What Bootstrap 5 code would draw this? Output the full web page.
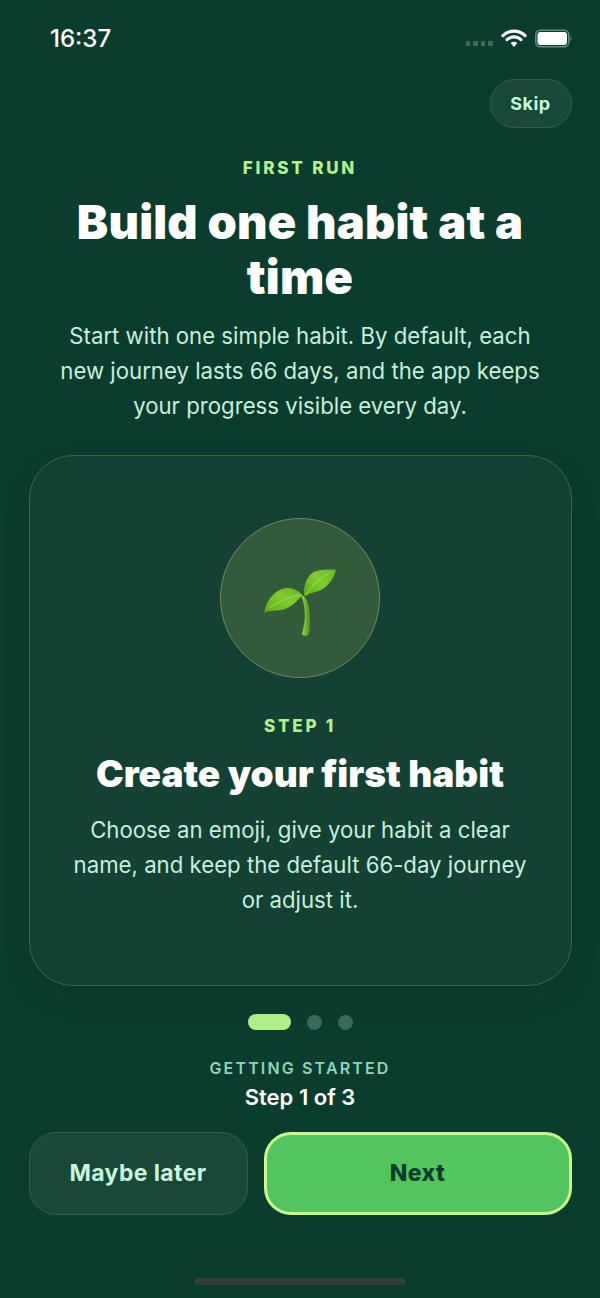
<!DOCTYPE html>
<html lang="en">
<head>
    <meta charset="UTF-8">
    <title>First Run</title>
    <link rel="stylesheet" href="https://cdn.jsdelivr.net/npm/bootstrap@5.3.0/dist/css/bootstrap.min.css">
    <style>
        body {
            background: #0b3d2f;
            font-family: Inter, "Liberation Sans", sans-serif;
            color: #fff;
        }
        .screen { width: 600px; height: 1298px; overflow: hidden; padding: 0 28.5px; }
        .status-row { height: 79px; padding: 25px 0 0 21.5px; }
        .status-icons { margin-top: 3px; }
        .status-time { font-size: 24px; font-weight: 500; line-height: 28px; color: #fff; }
        .signal-dots { gap: 3px; margin-top: 11px; margin-right: 8px; }
        .signal-dots i { display: block; width: 4.5px; height: 4.5px; border-radius: 1px; background: #3a6b5c; }
        .skip-btn {
            width: 82px; height: 49px; padding: 0;
            border-radius: 25px;
            background: #184838; border: 1px solid #2f5f50;
            color: #c9f5de; font-size: 18px; font-weight: 700; letter-spacing: .5px;
        }
        .eyebrow { font-size: 17px; font-weight: 800; letter-spacing: 2.8px; line-height: 20px; color: #b4f08c; }
        .hero-eyebrow { margin-top: 30px; }
        .hero-title { font-size: 47px; font-weight: 900; letter-spacing: .2px; line-height: 55px; margin: 16px 20px 0; color: #fff; }
        .hero-text { font-size: 22.2px; line-height: 35px; color: #c8eedc; margin: 14px 20px 0; }
        .step-card {
            height: 531px; margin-top: 32px;
            padding-top: 62px;
            border-radius: 44px;
            background: #134134; border: 1px solid #336b50;
            box-shadow: 0 12px 32px rgba(0, 0, 0, .08);
            color: #fff;
        }
        .seed-circle {
            width: 160px; height: 160px;
            background: #345a3c; border: 1.5px solid #6b8c5f;
        }
        .seed-circle svg { margin: 8px 0 0 2px; }
        .step-eyebrow { margin-top: 38px; }
        .step-title { font-size: 37px; font-weight: 900; line-height: 44px; margin: 16px 0 0; color: #fff; }
        .step-text { font-size: 22.2px; line-height: 35px; color: #c8eedc; margin: 16px 40px 0; }
        .pager { gap: 16px; margin-top: 28px; height: 16px; }
        .pager-on { width: 43px; height: 16px; border-radius: 8px; background: #b2ef88; }
        .pager-off { width: 15px; height: 15px; border-radius: 50%; background: #3d6a5b; }
        .progress-label { font-size: 16px; font-weight: 600; letter-spacing: 2.15px; line-height: 20px; color: #8fd5b8; margin-top: 28px; }
        .progress-step { font-size: 22px; font-weight: 600; line-height: 26px; color: #fff; margin-top: 6px; }
        .actions { gap: 16px; margin-top: 22px; }
        .later-btn, .next-btn { height: 83px; border-radius: 27px; font-size: 23px; font-weight: 700; letter-spacing: .4px; padding: 0; }
        .later-btn { width: 219px; background: #184838; border: 1px solid #2f5f50; color: #c9f5de; }
        .next-btn { flex: 1; background: #52c55e; border: 3px solid #cdf98a; color: #0b3d2f; font-weight: 800; }
        .home-bar { width: 212px; height: 7px; border-radius: 4px; background: #333f3a; margin: 63px auto 0; }
    </style>
</head>
<body>

<div class="screen">
    <div class="status-row d-flex justify-content-between align-items-start">
        <div class="status-time">16:37</div>
        <div class="status-icons d-flex align-items-center">
            <div class="signal-dots d-flex">
                <i></i><i></i><i></i><i></i>
            </div>
            <svg width="26" height="20" viewBox="0 0 24 19">
                <path d="M1.5 7.2C7.5 1.6 16.5 1.6 22.5 7.2M5.4 11C9.2 7.6 14.8 7.6 18.6 11" fill="none" stroke="#fff" stroke-width="3" stroke-linecap="round"/>
                <path d="M8.8 14.2C10.8 12.7 13.2 12.7 15.2 14.2L12 18Z" fill="#fff"/>
            </svg>
            <svg class="ms-2" width="37" height="19" viewBox="0 0 37 19">
                <rect x=".75" y="1.25" width="33" height="16.5" rx="4.5" fill="none" stroke="#5f8f80" stroke-width="1.5"/>
                <rect x="2.5" y="3" width="29.5" height="13" rx="3" fill="#fff"/>
                <path d="M35.3 7c1.4.5 1.4 4.5 0 5z" fill="#5f8f80"/>
            </svg>
        </div>
    </div>

    <div class="d-flex justify-content-end">
        <button class="btn skip-btn">Skip</button>
    </div>

    <div class="text-center">
        <div class="eyebrow hero-eyebrow">FIRST RUN</div>
        <h1 class="hero-title">Build one habit at a time</h1>
        <p class="hero-text">Start with one simple habit. By default, each new journey lasts 66 days, and the app keeps your progress visible every day.</p>
    </div>

    <div class="card step-card text-center align-items-center">
        <div class="seed-circle rounded-circle d-flex align-items-center justify-content-center">
            <svg width="80" height="72" viewBox="0 0 80 72">
                <defs>
                    <linearGradient id="leafA" x1="0" y1="1" x2="1" y2="0">
                        <stop offset="0" stop-color="#58ab14"/>
                        <stop offset=".55" stop-color="#84cc2e"/>
                        <stop offset="1" stop-color="#62b81e"/>
                    </linearGradient>
                    <linearGradient id="stemA" x1="0" y1="0" x2="1" y2="0">
                        <stop offset="0" stop-color="#96d842"/>
                        <stop offset="1" stop-color="#419a14"/>
                    </linearGradient>
                </defs>
                <path d="M42 29.5C47 34 49 42 49 52C49 60 49 65 47.5 68.5C45.5 70.5 41.5 70 41 68C42.5 62 44 55 43.8 48C43.5 41 42.5 35 40.5 31Z" fill="url(#stemA)"/>
                <path d="M3.3 46.7C5 36 12 25 23 22.5C30 21 37 24 41.7 29.5C37 33 33 40 24 43C16 45.5 9 44 3.3 46.7Z" fill="url(#leafA)"/>
                <path d="M8 42C18 36 28 29 40 29.5" fill="none" stroke="#aee062" stroke-width=".8"/>
                <path d="M43.5 31C42 24 44 12 52 6.5C58 3 67 3.5 75 3.5C73 12 68 20 59 24.5C53 27 47 27 43.5 31Z" fill="url(#leafA)"/>
                <path d="M45 29C50 20 60 11 71 5.5" fill="none" stroke="#aee062" stroke-width=".8"/>
            </svg>
        </div>
        <div class="eyebrow step-eyebrow">STEP 1</div>
        <h2 class="step-title">Create your first habit</h2>
        <p class="step-text">Choose an emoji, give your habit a clear name, and keep the default 66-day journey or adjust it.</p>
    </div>

    <div class="pager d-flex justify-content-center align-items-center">
        <div class="pager-on"></div>
        <div class="pager-off"></div>
        <div class="pager-off"></div>
    </div>

    <div class="text-center">
        <div class="progress-label">GETTING STARTED</div>
        <div class="progress-step">Step 1 of 3</div>
    </div>

    <div class="actions d-flex">
        <button class="btn later-btn">Maybe later</button>
        <button class="btn next-btn">Next</button>
    </div>

    <div class="home-bar"></div>
</div>

<script src="https://cdn.jsdelivr.net/npm/bootstrap@5.3.0/dist/js/bootstrap.bundle.min.js"></script>
</body>
</html>
